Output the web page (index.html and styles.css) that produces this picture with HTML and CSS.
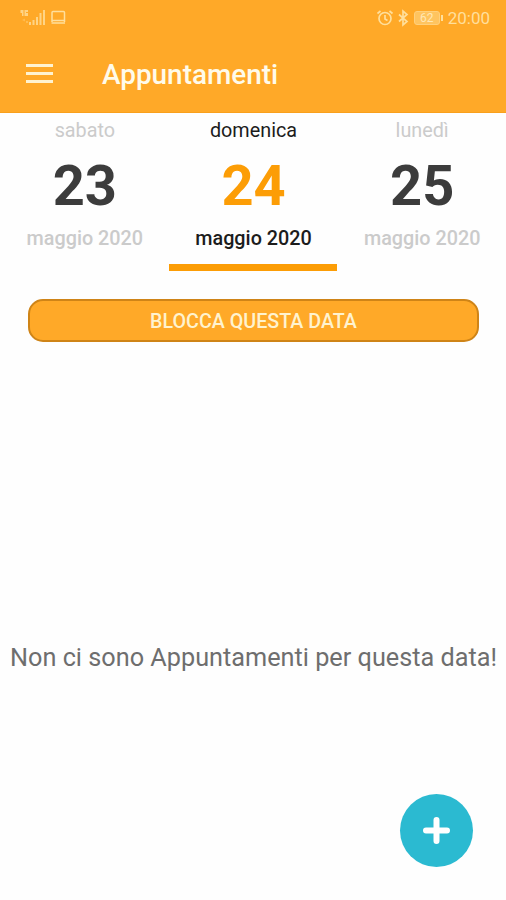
FILE: index.html
```html
<!DOCTYPE html>
<html lang="it">
<head>
    <meta charset="UTF-8">
    <meta name="viewport" content="width=device-width, initial-scale=1.0">
    <title>Appuntamenti</title>
    <link rel="stylesheet" href="styles.css">
</head>
<body>
    <header class="header">
        <div class="status-bar">
            <div class="status-left">
                <svg width="28" height="18" viewBox="0 0 28 18" fill="currentColor">
                    <path d="M0.500 1h3v6h-1.500v-3h-1.500zM4.500 1h3.500v2h-2v1h2v3h-3.500z" opacity=".8"/>
                    <path d="M2 11l3-1.500v3zM6 12h2v2h-2z" opacity=".35"/>
                    <path d="M9 13h2v3h-2zM12.500 11h2v5h-2zM16 8h2v8h-2zM19.500 4h2v12h-2zM23 1h2v15h-2z" opacity=".8"/>
                </svg>
                <svg width="16" height="18" viewBox="0 0 16 18" fill="none" stroke="currentColor" stroke-width="1.500">
                    <path d="M1 13v-9.500q0-1 1-1h10.500q1 0 1 1v9.500M0.500 11.500h13.500M0.500 14h13.500"/>
                </svg>
            </div>
            <div class="status-right">
                <svg width="17" height="18" viewBox="0 0 17 18" fill="none" stroke="currentColor" stroke-width="1.700">
                    <circle cx="8" cy="9.500" r="6"/>
                    <path d="M8 6v4l2.500 1.500M0.500 4.500l3-2.500M15.500 4.500l-3-2.500"/>
                </svg>
                <svg class="bluetooth" width="12" height="18" viewBox="0 0 12 18" fill="none" stroke="currentColor" stroke-width="1.700">
                    <path d="M1 5.500l8 7-4 3.500v-14l4 3.500-8 7"/>
                </svg>
                <span class="battery"><span class="battery-level">62</span></span>
                <span class="clock">20:00</span>
            </div>
        </div>
        <div class="toolbar">
            <div class="menu">
                <span></span>
                <span></span>
                <span></span>
            </div>
            <h1>Appuntamenti</h1>
        </div>
    </header>

    <nav class="days">
        <div class="day">
            <span class="weekday">sabato</span>
            <span class="number">23</span>
            <span class="month">maggio 2020</span>
        </div>
        <div class="day active">
            <span class="weekday">domenica</span>
            <span class="number">24</span>
            <span class="month">maggio 2020</span>
        </div>
        <div class="day">
            <span class="weekday">lunedì</span>
            <span class="number">25</span>
            <span class="month">maggio 2020</span>
        </div>
    </nav>

    <button class="block-button">BLOCCA QUESTA DATA</button>

    <main class="content">
        <p class="empty">Non ci sono Appuntamenti per questa data!</p>
    </main>

    <button class="fab" aria-label="Aggiungi">
        <svg width="28" height="28" viewBox="0 0 28 28" stroke="currentColor" stroke-width="6" stroke-linecap="round">
            <path d="M13.500 3v21M3 13.500h21"/>
        </svg>
    </button>
</body>
</html>
```
FILE: styles.css
```css
* {
    box-sizing: border-box;
}
body {
    font-family: Roboto, sans-serif;
    background-color: #fefefe;
    margin: 0;
    height: 900px;
    display: flex;
    flex-direction: column;
    overflow: hidden;
}
.header {
    background-color: #ffa928;
    height: 113px;
    color: #fffbea;
    border-bottom: 1px solid #f9a01c;
}
.status-bar {
    display: flex;
    justify-content: space-between;
    align-items: center;
    height: 36px;
    padding: 0 16px 0 20px;
    color: #ffdf9c;
}
.status-left, .status-right {
    display: flex;
    align-items: center;
}
.status-left {
    gap: 3px;
}
.bluetooth {
    margin-left: 4px;
}
.battery {
    position: relative;
    width: 26px;
    height: 14px;
    margin: 0 1px 0 4px;
    border: 1px solid #ffd07c;
    border-radius: 3px;
    background-color: #ffc45f;
    display: flex;
    align-items: center;
    justify-content: center;
}
.battery::after {
    content: "";
    position: absolute;
    right: -4px;
    top: 3px;
    width: 2px;
    height: 6px;
    background-color: #ffdf9c;
}
.battery-level {
    font-size: 12px;
    color: #ffe7b4;
}
.clock {
    font-size: 17px;
    margin-left: 7px;
}
.toolbar {
    display: flex;
    align-items: center;
    height: 77px;
    padding-left: 26px;
}
.menu {
    display: flex;
    flex-direction: column;
    gap: 5px;
    width: 27px;
    margin-top: -2px;
}
.menu span {
    height: 3px;
    background-color: #fff3d0;
}
.toolbar h1 {
    margin: 0 0 0 49px;
    font-size: 27.9px;
    font-weight: 500;
}
.days {
    display: flex;
    height: 158px;
}
.day {
    flex: 1;
    display: flex;
    flex-direction: column;
    align-items: center;
    color: #cbcbcb;
    font-size: 19.8px;
    line-height: 24px;
    padding: 6px 0 0 1px;
    border-bottom: 7px solid transparent;
}
.number {
    font-size: 56px;
    font-weight: 700;
    line-height: 66px;
    margin: 10px 0 8px;
    color: #3c3c3c;
}
.month {
    font-weight: 500;
}
.active {
    color: #1c1c1c;
    border-bottom-color: #fc9d06;
}
.active .number {
    color: #fc9d06;
}
.block-button {
    height: 43px;
    margin: 28px 27px 0 28px;
    padding: 2px 0 0;
    font-family: inherit;
    font-size: 19.7px;
    font-weight: 500;
    color: #fff3cf;
    background-color: #ffa928;
    border: 2px solid #cf8417;
    border-radius: 15px;
}
.content {
    flex: 1;
    display: flex;
    align-items: center;
    justify-content: center;
    padding: 73px 0 0 1px;
}
.empty {
    margin: 0;
    font-size: 25.25px;
    color: #6e6e6e;
    white-space: nowrap;
}
.fab {
    position: absolute;
    right: 33px;
    bottom: 33px;
    width: 73px;
    height: 73px;
    padding: 0;
    display: flex;
    align-items: center;
    justify-content: center;
    border: none;
    border-radius: 50%;
    background-color: #2bbad1;
    color: #fff;
}
```
